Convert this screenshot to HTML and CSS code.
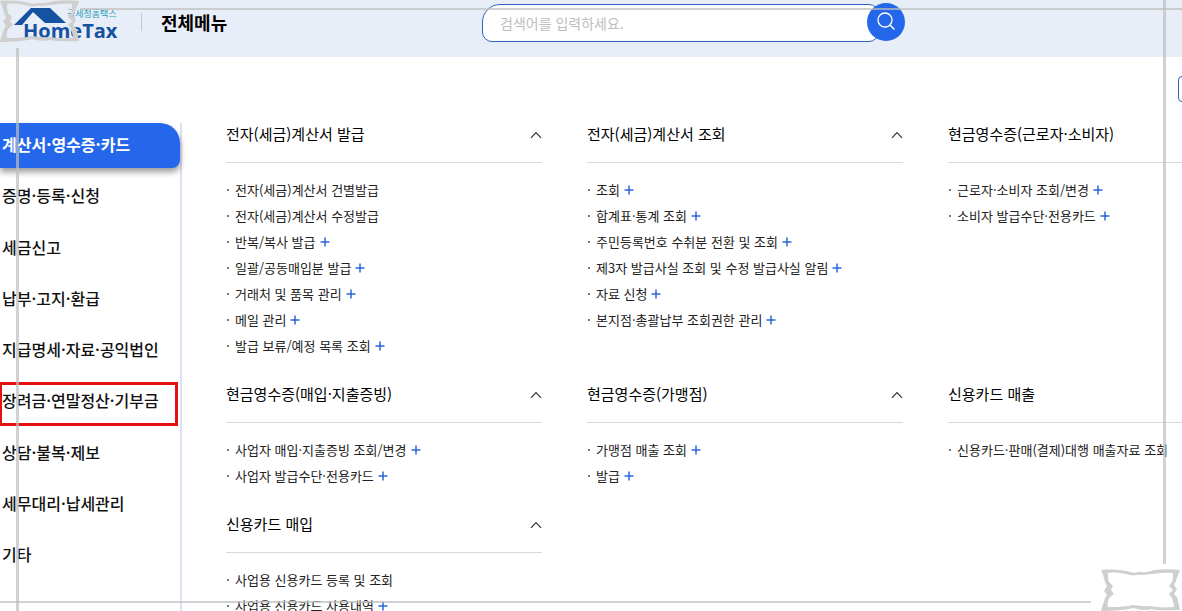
FILE: index.html
```html
<!DOCTYPE html>
<html lang="ko">
<head>
  <meta charset="UTF-8" />
  <meta name="viewport" content="width=device-width, initial-scale=1.0"/>
  <title>전체메뉴 | HomeTax</title>
  <link rel="stylesheet" href="styles.css">
</head>
<body>
  <svg class="defs" aria-hidden="true">
    <symbol id="plus" viewBox="0 0 10 10"><path d="M5 0.5V9.5M0.5 5H9.5" fill="none" stroke="#2b66d9" stroke-width="1.5"/></symbol>
    <symbol id="chevron" viewBox="0 0 12 8"><path d="M1 6.8L6 1.6L11 6.8" fill="none" stroke="#333" stroke-width="1.2"/></symbol>
    <symbol id="corner" viewBox="0 0 80 42">
      <path fill="#cfcfcf" fill-rule="evenodd" d="M0 1C10 0 22 1 29 3C34 5 38 2 41 3C45 4 48 2 54 1C62 0 70 0 79 1C78 5 76 8 75 12L73 16L76 20L73 25L76 28C77 32 78 36 79 41C68 41 58 42 50 40C44 42 36 40 32 39C26 41 12 42 0 42C1 37 3 33 4 29L6 26L3 22L6 17L4 13C3 9 2 5 0 1Z
        M7 4C14 3 22 4 29 6C34 7 38 5 41 6C50 6 60 3 72 4C72 8 72 10 71 13L68 17L72 21L68 25L71 29C72 32 73 36 73 38C62 39 56 38 49 37C43 38 36 36 31 36C24 38 14 38 7 38C6 35 7 32 8 29L13 25L10 21L12 17L8 13C7 10 7 7 7 4Z"/>
    </symbol>
  </svg>

  <header class="header">
    <div class="brand">
      <a class="logo" href="#" aria-label="국세청홈택스 HomeTax">
        <svg class="roof" viewBox="0 0 54 20" aria-hidden="true">
          <path d="M0 19L17 2H36L52 17H31L19 6L8 19Z" fill="#1552a2"/>
        </svg>
        <span class="logo-ko">국세청홈택스</span>
        <span class="logo-en">HomeTax</span>
      </a>
      <h1>전체메뉴</h1>
    </div>
    <form class="search">
      <input type="text" aria-label="검색어" placeholder="검색어를 입력하세요.">
      <button type="submit" aria-label="검색">
        <svg viewBox="0 0 20 20" width="20" height="20"><circle cx="9" cy="8" r="7" fill="none" stroke="#fff" stroke-width="1.3"/><path d="M14 13L18.500 17.500" stroke="#fff" stroke-width="1.5"/></svg>
      </button>
    </form>
  </header>

  <div class="page">
    <div class="toolbar"><button type="button" aria-label="닫기"></button></div>
    <div class="layout">
      <nav class="sidebar">
        <ul>
          <li class="active"><a href="#">계산서·영수증·카드</a></li>
          <li><a href="#">증명·등록·신청</a></li>
          <li><a href="#">세금신고</a></li>
          <li><a href="#">납부·고지·환급</a></li>
          <li><a href="#">지급명세·자료·공익법인</a></li>
          <li class="marked"><a href="#">장려금·연말정산·기부금</a></li>
          <li><a href="#">상담·불복·제보</a></li>
          <li><a href="#">세무대리·납세관리</a></li>
          <li><a href="#">기타</a></li>
        </ul>
      </nav>

      <main class="menu">
        <section>
          <h2>전자(세금)계산서 발급 <button type="button" aria-label="접기"><svg><use href="#chevron"/></svg></button></h2>
          <ul>
            <li><a href="#">전자(세금)계산서 건별발급</a></li>
            <li><a href="#">전자(세금)계산서 수정발급</a></li>
            <li><a href="#">반복/복사 발급</a><button type="button" aria-label="펼치기"><svg><use href="#plus"/></svg></button></li>
            <li><a href="#">일괄/공동매입분 발급</a><button type="button" aria-label="펼치기"><svg><use href="#plus"/></svg></button></li>
            <li><a href="#">거래처 및 품목 관리</a><button type="button" aria-label="펼치기"><svg><use href="#plus"/></svg></button></li>
            <li><a href="#">메일 관리</a><button type="button" aria-label="펼치기"><svg><use href="#plus"/></svg></button></li>
            <li><a href="#">발급 보류/예정 목록 조회</a><button type="button" aria-label="펼치기"><svg><use href="#plus"/></svg></button></li>
          </ul>
        </section>

        <section>
          <h2>전자(세금)계산서 조회 <button type="button" aria-label="접기"><svg><use href="#chevron"/></svg></button></h2>
          <ul>
            <li><a href="#">조회</a><button type="button" aria-label="펼치기"><svg><use href="#plus"/></svg></button></li>
            <li><a href="#">합계표·통계 조회</a><button type="button" aria-label="펼치기"><svg><use href="#plus"/></svg></button></li>
            <li><a href="#">주민등록번호 수취분 전환 및 조회</a><button type="button" aria-label="펼치기"><svg><use href="#plus"/></svg></button></li>
            <li><a href="#">제3자 발급사실 조회 및 수정 발급사실 알림</a><button type="button" aria-label="펼치기"><svg><use href="#plus"/></svg></button></li>
            <li><a href="#">자료 신청</a><button type="button" aria-label="펼치기"><svg><use href="#plus"/></svg></button></li>
            <li><a href="#">본지점·총괄납부 조회권한 관리</a><button type="button" aria-label="펼치기"><svg><use href="#plus"/></svg></button></li>
          </ul>
        </section>

        <section>
          <h2>현금영수증(근로자·소비자)</h2>
          <ul>
            <li><a href="#">근로자·소비자 조회/변경</a><button type="button" aria-label="펼치기"><svg><use href="#plus"/></svg></button></li>
            <li><a href="#">소비자 발급수단·전용카드</a><button type="button" aria-label="펼치기"><svg><use href="#plus"/></svg></button></li>
          </ul>
        </section>

        <section>
          <h2>현금영수증(매입·지출증빙) <button type="button" aria-label="접기"><svg><use href="#chevron"/></svg></button></h2>
          <ul>
            <li><a href="#">사업자 매입·지출증빙 조회/변경</a><button type="button" aria-label="펼치기"><svg><use href="#plus"/></svg></button></li>
            <li><a href="#">사업자 발급수단·전용카드</a><button type="button" aria-label="펼치기"><svg><use href="#plus"/></svg></button></li>
          </ul>
        </section>

        <section>
          <h2>현금영수증(가맹점) <button type="button" aria-label="접기"><svg><use href="#chevron"/></svg></button></h2>
          <ul>
            <li><a href="#">가맹점 매출 조회</a><button type="button" aria-label="펼치기"><svg><use href="#plus"/></svg></button></li>
            <li><a href="#">발급</a><button type="button" aria-label="펼치기"><svg><use href="#plus"/></svg></button></li>
          </ul>
        </section>

        <section>
          <h2>신용카드 매출</h2>
          <ul>
            <li><a href="#">신용카드·판매(결제)대행 매출자료 조회</a></li>
          </ul>
        </section>

        <section>
          <h2>신용카드 매입 <button type="button" aria-label="접기"><svg><use href="#chevron"/></svg></button></h2>
          <ul>
            <li><a href="#">사업용 신용카드 등록 및 조회</a></li>
            <li><a href="#">사업용 신용카드 사용내역</a><button type="button" aria-label="펼치기"><svg><use href="#plus"/></svg></button></li>
          </ul>
        </section>
      </main>
    </div>
  </div>

  <!-- decorative frame over the page -->
  <div class="frame" aria-hidden="true">
    <span class="line line-top"></span>
    <span class="line line-right"></span>
    <span class="line line-bottom"></span>
    <span class="line line-left"></span>
    <svg class="corner corner-start"><use href="#corner"/></svg>
    <svg class="corner corner-end"><use href="#corner"/></svg>
  </div>
</body>
</html>
```
FILE: styles.css
```css
* {
  box-sizing: border-box;
}

body {
  margin: 0;
  height: 100vh;
  overflow: hidden;
  display: flex;
  flex-direction: column;
  font-family: "Noto Sans CJK KR", "Noto Sans", sans-serif;
  color: #111;
  background: #fff;
}

h1,
h2,
ul {
  margin: 0;
  padding: 0;
}

ul {
  list-style: none;
}

a {
  color: inherit;
  text-decoration: none;
}

button {
  padding: 0;
  border: none;
  background: none;
  cursor: pointer;
}

.defs {
  display: none;
}

/* header */
.header {
  flex: none;
  display: grid;
  grid-template-columns: minmax(240px, 482px) minmax(240px, 423px);
  height: 57px;
  background: #e8eef7;
}

.brand {
  display: flex;
  align-items: flex-start;
  padding: 6px 0 0 14px;
}

.logo {
  display: grid;
  grid-template-columns: 53px auto;
  grid-template-rows: 16px 18px;
  width: 106px;
}

.roof {
  width: 54px;
  height: 20px;
}

.logo-ko {
  font-size: 9px;
  line-height: 16px;
  color: #2a9cb8;
  white-space: nowrap;
}

.logo-en {
  grid-column: 1 / 3;
  padding-left: 9px;
  font-family: "Open Sans", sans-serif;
  font-size: 20px;
  font-weight: 700;
  line-height: 18px;
  color: #1552a2;
}

.brand h1 {
  margin-left: 21px;
  font-size: 18px;
  font-weight: 700;
  line-height: 32px;
  color: #000;
  display: flex;
  align-items: center;
  gap: 19px;
}

.brand h1::before {
  content: "";
  width: 1px;
  height: 18px;
  background: #c3c8d2;
}

.search {
  display: flex;
  align-items: flex-start;
  padding-top: 3px;
}

.search input {
  flex: 1;
  min-width: 0;
  height: 38px;
  margin: 1px -12px 0 0;
  padding: 0 17px;
  border: 1px solid #2f62c4;
  border-radius: 18px 10px 10px 10px;
  background: #fff;
  font-family: inherit;
  font-size: 14px;
  outline: none;
}

.search input::placeholder {
  color: #bdbdbd;
}

.search button {
  position: relative;
  display: flex;
  align-items: center;
  justify-content: center;
  width: 38px;
  height: 38px;
  border-radius: 50%;
  background: #2467eb;
}

/* page body */
.page {
  flex: 1;
  display: flex;
  flex-direction: column;
  min-width: 1264px;
}

.toolbar {
  display: flex;
  justify-content: flex-end;
  padding: 19px 0 4px;
}

.toolbar button {
  width: 86px;
  height: 26px;
  border: 1px solid #2f62c4;
  border-radius: 4px;
}

.layout {
  flex: 1;
  display: flex;
  gap: 44px;
}

/* sidebar */
.sidebar {
  flex: none;
  width: 182px;
  margin-top: 17px;
  border-right: 2px solid #e0e0f4;
}

.sidebar ul {
  display: flex;
  flex-direction: column;
  justify-content: space-between;
  min-height: 455px;
}

.sidebar li {
  position: relative;
  padding: 0 0 2px 2px;
  font-size: 16px;
  font-weight: 500;
  line-height: 43px;
}

.sidebar .active {
  border-radius: 0 20px 8px 0;
  background: #2467eb;
  box-shadow: 0 4px 6px rgba(0, 0, 0, 0.4);
  font-weight: 700;
  color: #fff;
}

.sidebar .marked::after {
  content: "";
  position: absolute;
  inset: 3px 2px -2px -1px;
  border: 3px solid #e60f12;
}

/* menu */
.menu {
  flex: 1;
  display: grid;
  grid-template-columns: repeat(3, minmax(316px, 1fr));
  gap: 7px 45px;
  align-content: start;
}

.menu h2 {
  display: flex;
  align-items: center;
  justify-content: space-between;
  height: 57px;
  padding-bottom: 2px;
  border-bottom: 1px solid #d9d9d9;
  font-size: 15px;
  font-weight: 400;
  color: #000;
}

.menu h2 button {
  padding-top: 4px;
}

.menu h2 svg {
  display: block;
  width: 12px;
  height: 8px;
}

.menu ul {
  padding-top: 14px;
}

.menu li {
  display: flex;
  align-items: center;
  height: 26px;
  font-size: 13px;
  color: #222;
  white-space: nowrap;
}

.menu li::before {
  content: "";
  width: 2px;
  height: 2px;
  margin: 0 6px 0 1px;
  background: #777;
}

.menu li a {
  padding-bottom: 2px;
}

.menu li button {
  margin-left: 4px;
}

.menu li svg {
  display: block;
  width: 10px;
  height: 10px;
}

/* frame */
.frame {
  position: fixed;
  inset: 0;
  pointer-events: none;
}

.line {
  position: absolute;
  background: rgba(190, 190, 190, 0.7);
}

.line-top {
  top: 8px;
  left: 80px;
  right: 0;
  height: 2px;
}

.line-right {
  top: 0;
  right: 16px;
  bottom: 47px;
  width: 3px;
}

.line-bottom {
  left: 0;
  right: 91px;
  bottom: 8px;
  height: 2px;
}

.line-left {
  top: 48px;
  left: 16px;
  bottom: 0;
  width: 3px;
}

.corner {
  position: absolute;
  width: 80px;
  height: 42px;
}

.corner-start {
  top: 0;
  left: 0;
}

.corner-end {
  right: 1px;
  bottom: 0;
}
```
